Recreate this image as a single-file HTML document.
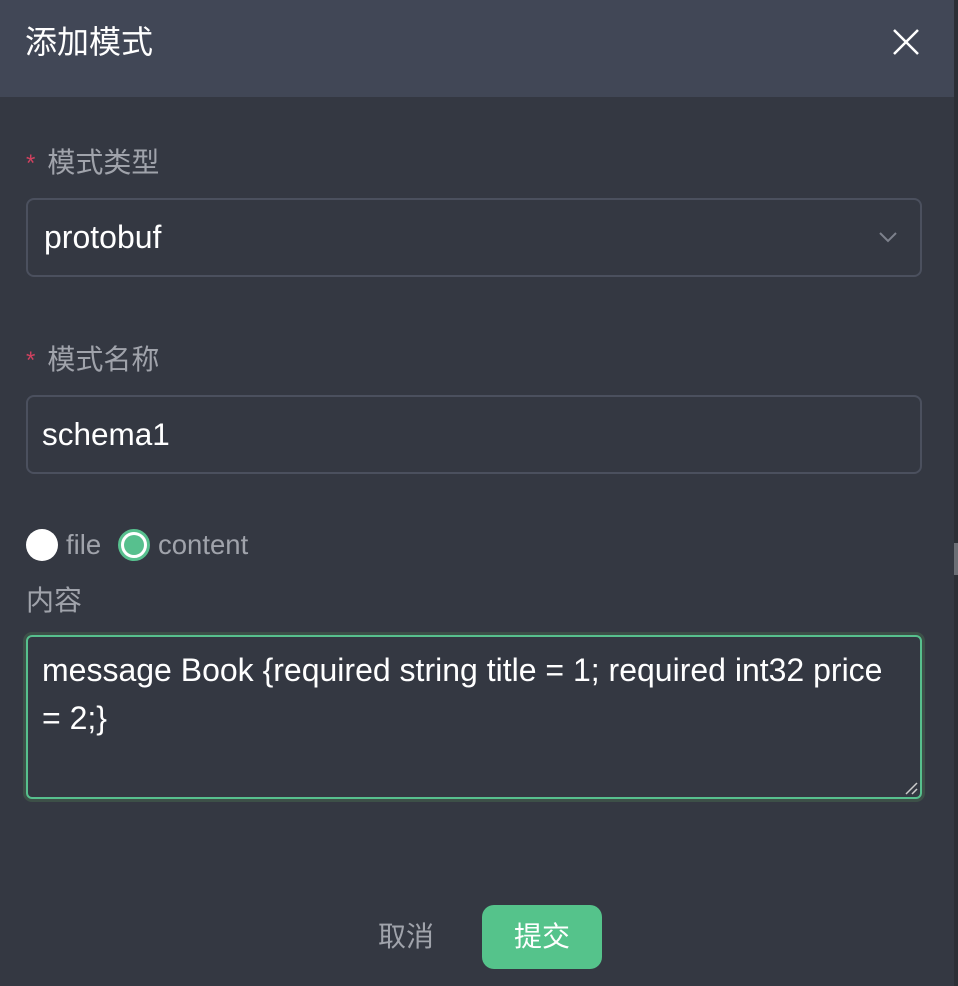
<!DOCTYPE html>
<html><head><meta charset="utf-8"><style>
*{box-sizing:border-box;margin:0;padding:0}
body{width:958px;height:986px;background:#343842;font-family:"Liberation Sans","Noto Sans CJK SC",sans-serif;position:relative;overflow:hidden}
.hdr{position:absolute;left:0;top:0;width:954px;height:97px;background:#414756}
.title{position:absolute;left:25px;top:22px;font-size:32px;color:#fff;line-height:40px}
.x{position:absolute;left:892px;top:28px}
.sb{position:absolute;left:954px;top:0;width:4px;height:986px;background:#2c2f36}
.thumb{position:absolute;left:954px;top:543px;width:4px;height:32px;background:#6b6e75}
.lbl{position:absolute;left:26px;font-size:28px;color:#a0a3ab;line-height:34px}
.lbl b{color:#d0415f;font-weight:normal;font-size:24px;margin-right:12px;position:relative;top:-1px}
.inp{position:absolute;left:26px;width:896px;border:2px solid #4b505e;border-radius:8px;color:#fff;font-size:32px;padding-left:16px}
.rad{position:absolute;top:529px;width:32px;height:32px;border-radius:50%}
.rt{position:absolute;top:528px;font-size:27.5px;color:#a0a3ab;line-height:34px}
.ta{position:absolute;left:26px;top:635px;width:896px;height:164px;border:2px solid #57c08e;border-radius:6px;box-shadow:0 0 0 3px #3d5048;color:#fff;font-size:32px;line-height:48px;padding:9px 14px}
.btn{position:absolute;left:482px;top:905px;width:120px;height:64px;background:#55c38b;border-radius:12px;color:#fff;font-size:28px;text-align:center;line-height:64px}
.cancel{position:absolute;left:378px;top:920px;font-size:28px;color:#a0a3ab;line-height:34px}
</style></head><body>
<div class="hdr"><div class="title">添加模式</div>
<svg class="x" width="28" height="28" viewBox="0 0 28 28"><path d="M2 2L26 26M26 2L2 26" stroke="#fff" stroke-width="2.5"/></svg></div>
<div class="sb"></div><div class="thumb"></div>
<div class="lbl" style="top:146px"><b>*</b>模式类型</div>
<div class="inp" style="top:198px;height:79px;line-height:75px">protobuf
<svg style="position:absolute;right:22px;top:30px" width="20" height="14" viewBox="0 0 20 14"><path d="M2 3L10 11L18 3" stroke="#7d818c" stroke-width="2" fill="none"/></svg></div>
<div class="lbl" style="top:343px"><b>*</b>模式名称</div>
<div class="inp" style="top:395px;height:79px;line-height:75px;padding-left:14px;font-size:31.5px">schema1</div>
<div class="rad" style="left:26px;background:#fff"></div>
<div class="rt" style="left:66px">file</div>
<div class="rad" style="left:118px;border:3px solid #57c08e;background:#fff"><div style="position:absolute;left:3px;top:3px;width:20px;height:20px;border-radius:50%;background:#57c08e"></div></div>
<div class="rt" style="left:158px">content</div>
<div class="lbl" style="top:584px">内容</div>
<div class="ta">message Book {required string title = 1; required int32 price = 2;}
<svg style="position:absolute;right:2px;bottom:2px" width="14" height="14" viewBox="0 0 14 14"><path d="M13 2L2 13M13 8L8 13" stroke="#ccc" stroke-width="1.5"/></svg></div>
<div class="cancel">取消</div>
<div class="btn">提交</div>
</body></html>
